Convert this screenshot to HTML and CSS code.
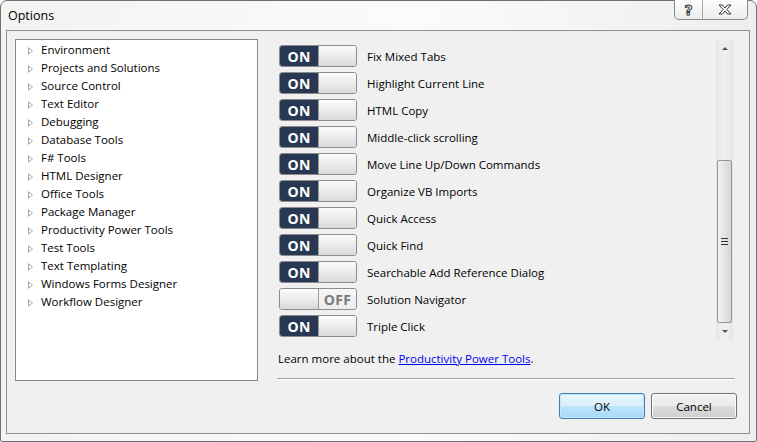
FILE: index.html
```html
<!DOCTYPE html>
<html lang="en">
<head>
    <meta charset="UTF-8">
    <title>Options</title>
    <link rel="stylesheet" href="styles.css">
</head>
<body>
    <div class="window">
        <div class="titlebar">
            <span class="title">Options</span>
            <div class="caption-buttons">
                <span class="cap-btn help">?</span>
                <span class="cap-btn close">
                    <svg width="14" height="11" viewBox="0 0 14 11">
                        <path d="M1 1h3.5l2.5 3 2.5-3h3.5l-4.2 4.5 4.2 4.5h-3.5l-2.5-3-2.5 3h-3.5l4.2-4.5z" fill="#fff" stroke="#333" stroke-width="1"/>
                    </svg>
                </span>
            </div>
        </div>

        <div class="client">
            <!-- category tree -->
            <ul class="tree">
                <li><span class="expander"></span>Environment</li>
                <li><span class="expander"></span>Projects and Solutions</li>
                <li><span class="expander"></span>Source Control</li>
                <li><span class="expander"></span>Text Editor</li>
                <li><span class="expander"></span>Debugging</li>
                <li><span class="expander"></span>Database Tools</li>
                <li><span class="expander"></span>F# Tools</li>
                <li><span class="expander"></span>HTML Designer</li>
                <li><span class="expander"></span>Office Tools</li>
                <li><span class="expander"></span>Package Manager</li>
                <li><span class="expander"></span>Productivity Power Tools</li>
                <li><span class="expander"></span>Test Tools</li>
                <li><span class="expander"></span>Text Templating</li>
                <li><span class="expander"></span>Windows Forms Designer</li>
                <li><span class="expander"></span>Workflow Designer</li>
            </ul>

            <div class="pane">
                <div class="scroll-area">
                    <div class="settings">
                        <div class="row"><span class="toggle on"><b>ON</b><i></i></span>Fix Mixed Tabs</div>
                        <div class="row"><span class="toggle on"><b>ON</b><i></i></span>Highlight Current Line</div>
                        <div class="row"><span class="toggle on"><b>ON</b><i></i></span>HTML Copy</div>
                        <div class="row"><span class="toggle on"><b>ON</b><i></i></span>Middle-click scrolling</div>
                        <div class="row"><span class="toggle on"><b>ON</b><i></i></span>Move Line Up/Down Commands</div>
                        <div class="row"><span class="toggle on"><b>ON</b><i></i></span>Organize VB Imports</div>
                        <div class="row"><span class="toggle on"><b>ON</b><i></i></span>Quick Access</div>
                        <div class="row"><span class="toggle on"><b>ON</b><i></i></span>Quick Find</div>
                        <div class="row"><span class="toggle on"><b>ON</b><i></i></span>Searchable Add Reference Dialog</div>
                        <div class="row"><span class="toggle off"><i></i><b>OFF</b></span>Solution Navigator</div>
                        <div class="row"><span class="toggle on"><b>ON</b><i></i></span>Triple Click</div>
                    </div>
                    <div class="scrollbar">
                        <div class="arrow up"></div>
                        <div class="track">
                            <div class="thumb"><span class="grip"></span></div>
                        </div>
                        <div class="arrow down"></div>
                    </div>
                </div>

                <p class="more">Learn more about the <a href="#">Productivity Power Tools</a>.</p>
                <div class="separator"></div>

                <div class="buttons">
                    <button class="btn default">OK</button>
                    <button class="btn">Cancel</button>
                </div>
            </div>
        </div>
    </div>
</body>
</html>
```

FILE: styles.css
```css
/* Global */
* {
    box-sizing: border-box;
    margin: 0;
    padding: 0;
}

body {
    width: 757px;
    height: 442px;
    overflow: hidden;
    font-family: "Open Sans", "Noto Sans", sans-serif;
    font-size: 11.5px;
    color: #000;
    background: #fff;
}

/* Window frame */
.window {
    width: 757px;
    height: 442px;
    border: 1px solid #6f6f6f;
    border-radius: 7px 7px 2px 2px;
    background: linear-gradient(90deg, #f3f3f3 0%, #fbfbfb 55%, #eeeeee 100%);
    padding: 0 6px 7px 5px;
    display: flex;
    flex-direction: column;
}

.titlebar {
    height: 29px;
    display: flex;
    justify-content: space-between;
    align-items: flex-start;
}

.title {
    font-size: 12.5px;
    margin: 6px 0 0 2px;
}

.caption-buttons {
    display: flex;
    margin-top: -1px;
    margin-right: 2px;
    border: 1px solid #8a8a8a;
    border-top: none;
    border-radius: 0 0 5px 5px;
    background: linear-gradient(#fdfdfd, #ececec);
    height: 20px;
}

.cap-btn {
    display: flex;
    align-items: center;
    justify-content: center;
    height: 100%;
}

.help {
    width: 28px;
    border-right: 1px solid #a8a8a8;
    font-family: "DejaVu Sans", sans-serif;
    font-weight: bold;
    font-size: 14px;
    color: #fff;
    -webkit-text-stroke: 1px #333;
}

.close {
    width: 44px;
}

/* Client area */
.client {
    flex: 1;
    border: 1px solid #8e8f8f;
    background: #f0f0f0;
    display: flex;
    padding: 8px 0 0 8px;
}

/* Tree */
.tree {
    list-style: none;
    width: 243px;
    height: 342px;
    background: #fff;
    border: 1px solid #828790;
    padding: 1px 0 0 12px;
}

.tree li {
    height: 18px;
    line-height: 18px;
    display: flex;
    align-items: center;
    white-space: nowrap;
}

.expander {
    width: 0;
    height: 0;
    border-left: 5px solid #a6a6a6;
    border-top: 4px solid transparent;
    border-bottom: 4px solid transparent;
    margin-right: 8px;
    margin-top: 2px;
    position: relative;
}

.expander::after {
    content: "";
    position: absolute;
    left: -4px;
    top: -2px;
    border-left: 3px solid #fff;
    border-top: 2px solid transparent;
    border-bottom: 2px solid transparent;
}

/* Right pane */
.pane {
    width: 459px;
    margin-left: 19px;
    padding-top: 1px;
    display: flex;
    flex-direction: column;
}

.scroll-area {
    height: 300px;
    display: flex;
}

.settings {
    flex: 1;
    padding: 5px 0 0 2px;
}

.row {
    height: 22px;
    margin-bottom: 5px;
    display: flex;
    align-items: center;
    white-space: nowrap;
}

/* Toggle switch */
.toggle {
    width: 78px;
    height: 22px;
    border: 1px solid #8c8c8c;
    border-radius: 3px;
    overflow: hidden;
    display: flex;
    margin-right: 10px;
    font-family: "Open Sans", sans-serif;
}

.toggle b {
    width: 38px;
    display: flex;
    align-items: center;
    justify-content: center;
    font-size: 14px;
    font-weight: bold;
    letter-spacing: 0.3px;
}

.toggle i {
    flex: 1;
    background: linear-gradient(#fbfbfb 0%, #ececec 50%, #d9d9d9 100%);
    border-left: 1px solid #9a9a9a;
}

.toggle.on b {
    background: #283752;
    color: #fff;
}

.toggle.off b {
    flex: 1;
    color: #7a7a7a;
    background: linear-gradient(#f7f7f7, #ececec);
    border-left: 1px solid #9a9a9a;
}

.toggle.off i {
    flex: none;
    width: 38px;
    border-left: none;
}

/* Scrollbar */
.scrollbar {
    width: 17px;
    margin-right: 3px;
    display: flex;
    flex-direction: column;
    background: linear-gradient(90deg, #e6e6e6, #efefef 40%, #efefef 60%, #e6e6e6);
}

.arrow {
    height: 17px;
    display: flex;
    align-items: center;
    justify-content: center;
}

.arrow::before {
    content: "";
    border-left: 3px solid transparent;
    border-right: 3px solid transparent;
}

.arrow.up::before {
    border-bottom: 3px solid #555;
}

.arrow.down::before {
    border-top: 3px solid #555;
}

.track {
    flex: 1;
    padding-top: 103px;
}

.thumb {
    height: 163px;
    margin: 0 1px;
    border: 1px solid #959595;
    border-radius: 2px;
    background: linear-gradient(90deg, #f2f2f2, #e4e4e4 50%, #d6d6d6);
    display: flex;
    align-items: center;
    justify-content: center;
}

.grip {
    width: 7px;
    height: 7px;
    border-top: 1px solid #333;
    border-bottom: 1px solid #333;
    position: relative;
}

.grip::after {
    content: "";
    position: absolute;
    left: 0;
    right: 0;
    top: 2px;
    border-top: 1px solid #333;
}

/* Footer */
.more {
    margin-top: 11px;
    line-height: 16px;
    padding-left: 1px;
}

.more a {
    color: #0000ee;
}

.separator {
    margin-top: 11px;
    margin-right: 1px;
    border-top: 1px solid #a0a0a0;
    border-bottom: 1px solid #fff;
}

.buttons {
    display: flex;
    justify-content: flex-end;
    gap: 6px;
    margin-top: 13px;
    margin-right: -1px;
}

.btn {
    width: 86px;
    height: 26px;
    font-family: inherit;
    font-size: 11.5px;
    border: 1px solid #707070;
    border-radius: 3px;
    background: linear-gradient(#f2f2f2 0%, #ebebeb 49%, #dddddd 50%, #cfcfcf 100%);
    box-shadow: inset 0 0 0 1px #fcfcfc;
    color: #000;
}

.btn.default {
    border-color: #3c7fb1;
    background: linear-gradient(#eaf6fd 0%, #d9f0fc 49%, #bee6fd 50%, #a7d9f5 100%);
    box-shadow: inset 0 0 0 1px #c4e8fb;
}
```
